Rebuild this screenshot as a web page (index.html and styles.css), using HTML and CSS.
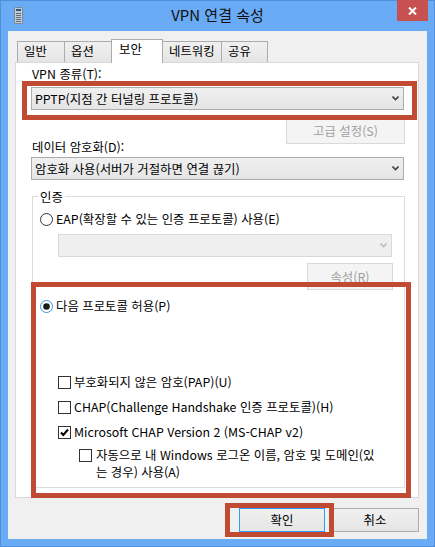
FILE: index.html
```html
<!DOCTYPE html>
<html lang="ko">
<head>
  <meta charset="UTF-8">
  <title>VPN 연결 속성</title>
  <link rel="stylesheet" href="styles.css">
</head>
<body>

  <div class="window">
    <div class="titlebar">
      <div class="app-icon">
        <svg width="9" height="17" viewBox="0 0 9 17">
          <rect x="0.5" y="0.5" width="8" height="16" rx="1" fill="#c3cad2" stroke="#7a8694"/>
          <rect x="2" y="2" width="5" height="2" fill="#34557f"/>
          <path d="M2 6.5h5M2 8.5h5M2 10.5h5M2 12.5h5M2 14.5h5" stroke="#5f6b78" stroke-width="1"/>
        </svg>
      </div>
      <div class="title">VPN 연결 속성</div>
      <div class="close">
        <svg width="9" height="8" viewBox="0 0 9 8">
          <path d="M1 0.5 L8 7.5 M8 0.5 L1 7.5" stroke="#fff" stroke-width="2"/>
        </svg>
      </div>
    </div>

    <div class="client">
      <div class="tabs">
        <div class="tab w1">일반</div>
        <div class="tab w2">옵션</div>
        <div class="tab w3 active">보안</div>
        <div class="tab w4">네트워킹</div>
        <div class="tab w5">공유</div>
      </div>

      <div class="panel">
        <div class="label">VPN 종류(T):</div>
        <div class="combo">
          <span>PPTP(지점 간 터널링 프로토콜)</span>
          <svg class="chev" width="7" height="5" viewBox="0 0 7 5"><path d="M0.5 0.5 L3.5 3.5 L6.5 0.5" fill="none" stroke="#444" stroke-width="1.6"/></svg>
        </div>
        <button class="btn disabled advanced">고급 설정(S)</button>

        <div class="label label-enc">데이터 암호화(D):</div>
        <div class="combo combo-enc">
          <span>암호화 사용(서버가 거절하면 연결 끊기)</span>
          <svg class="chev" width="7" height="5" viewBox="0 0 7 5"><path d="M0.5 0.5 L3.5 3.5 L6.5 0.5" fill="none" stroke="#444" stroke-width="1.6"/></svg>
        </div>

        <div class="group">
          <div class="legend">인증</div>

          <div class="option eap">
            <svg class="radio" width="13" height="13" viewBox="0 0 13 13"><circle cx="6.5" cy="6.5" r="6" fill="#fff" stroke="#333"/></svg>
            EAP(확장할 수 있는 인증 프로토콜) 사용(E)
          </div>
          <div class="combo disabled eap-combo">
            <svg class="chev" width="7" height="5" viewBox="0 0 7 5"><path d="M0.5 0.5 L3.5 3.5 L6.5 0.5" fill="none" stroke="#bdbdbd" stroke-width="1.6"/></svg>
          </div>
          <button class="btn disabled props">속성(R)</button>

          <div class="option allow">
            <svg class="radio" width="13" height="13" viewBox="0 0 13 13"><circle cx="6.5" cy="6.5" r="6" fill="#fff" stroke="#3d8fe0"/><circle cx="6.5" cy="6.5" r="3.3" fill="#1a1a1a"/></svg>
            다음 프로토콜 허용(P)
          </div>

          <div class="option check pap"><span class="box"></span>부호화되지 않은 암호(PAP)(U)</div>
          <div class="option check"><span class="box"></span>CHAP(Challenge Handshake 인증 프로토콜)(H)</div>
          <div class="option check">
            <span class="box">
              <svg width="11" height="11" viewBox="0 0 11 11"><path d="M2 5.5 L4.3 8 L9 2.5" fill="none" stroke="#000" stroke-width="2"/></svg>
            </span>Microsoft CHAP Version 2 (MS-CHAP v2)
          </div>
          <div class="option sub">
            <span class="box"></span>
            <span class="sub-text">자동으로 내 Windows 로그온 이름, 암호 및 도메인(있<br>는 경우) 사용(A)</span>
          </div>
        </div>
      </div>

      <div class="buttons">
        <button class="btn default">확인</button>
        <button class="btn cancel">취소</button>
      </div>
    </div>

    <div class="mark mark-type"></div>
    <div class="mark mark-auth"></div>
    <div class="mark mark-ok"></div>
  </div>

</body>
</html>
```

FILE: styles.css
```css
* {
  box-sizing: border-box;
}

body {
  margin: 0;
  font-family: "Noto Sans CJK KR", sans-serif;
  font-size: 12.4px;
  color: #000;
}

.window {
  position: relative;
  width: 435px;
  height: 547px;
  background-color: #6aabf5;
  box-shadow: inset 0 0 0 1px #4f8fdc;
  padding: 0 8px 8px;
}

/* title bar */

.titlebar {
  display: grid;
  grid-template-columns: 1fr auto 1fr;
  height: 31px;
}

.app-icon {
  margin-left: 6px;
  margin-top: 7px;
  line-height: 0;
}

.title {
  font-size: 15px;
  line-height: 30px;
  color: #111;
}

.close {
  justify-self: end;
  width: 31px;
  height: 21px;
  margin-right: -1px;
  background-color: #c75050;
  display: flex;
  align-items: center;
  justify-content: center;
}

/* client */

.client {
  height: 508px;
  background-color: #f0f0f0;
  padding: 8px 0 0 7px;
}

.tabs {
  display: flex;
  align-items: flex-end;
  height: 23px;
  margin-left: 2px;
}

.tab {
  height: 21px;
  border: 1px solid #acacac;
  border-bottom: none;
  margin-right: -1px;
  padding-left: 6px;
  line-height: 19px;
  background: linear-gradient(#f0f0f0, #e5e5e5);
}

.tab.active {
  position: relative;
  z-index: 1;
  height: 24px;
  margin-bottom: -1px;
  padding-left: 7px;
  line-height: 18px;
  background: #fff;
}

.w1 { width: 48px; }
.w2 { width: 48px; }
.w3 { width: 52px; }
.w4 { width: 60px; }
.w5 { width: 47px; }

.panel {
  width: 404px;
  height: 436px;
  border: 1px solid #d9d9d9;
  background-color: #fff;
  padding: 4px 0 0 15px;
  display: flex;
  flex-direction: column;
  align-items: flex-start;
}

.label {
  line-height: 14px;
  margin-left: 1px;
}

.label-enc {
  margin-top: -4px;
}

.combo {
  width: 373px;
  height: 23px;
  margin-top: 6px;
  border: 1px solid #acacac;
  background: linear-gradient(#f0f0f0, #e5e5e5);
  display: flex;
  align-items: center;
  padding: 0 4px 0 3px;
}

.combo .chev {
  margin-left: auto;
}

.combo-enc {
  margin-top: 3px;
}

.combo.disabled {
  background: #efefef;
  border-color: #d9d9d9;
}

.btn {
  font-family: inherit;
  font-size: 12.4px;
  color: #000;
  height: 24px;
  padding: 0;
  border: 1px solid #acacac;
  background: linear-gradient(#f0f0f0, #e5e5e5);
}

.btn.disabled {
  color: #a0a0a0;
  border-color: #d9d9d9;
  background: #f4f4f4;
}

.advanced {
  width: 119px;
  height: 27px;
  margin-top: 7px;
  margin-left: 255px;
}

/* authentication group */

.group {
  width: 373px;
  margin-top: 16px;
  margin-left: 1px;
  border: 1px solid #dcdcdc;
  padding: 0 0 6px 7px;
  display: flex;
  flex-direction: column;
  align-items: flex-start;
}

.legend {
  margin-top: -7px;
  margin-left: -2px;
  padding: 0 2px;
  line-height: 14px;
  background-color: #fff;
}

.option {
  display: flex;
  align-items: center;
  gap: 3px;
  height: 16px;
  line-height: 16px;
  white-space: nowrap;
}

.eap {
  margin-top: 7px;
}

.eap-combo {
  width: 334px;
  margin-top: 7px;
  margin-left: 18px;
}

.props {
  width: 86px;
  height: 27px;
  margin-top: 6px;
  margin-left: 267px;
}

.allow {
  margin-top: 8px;
}

.check {
  margin-top: 9px;
  margin-left: 18px;
}

.check.pap {
  margin-top: 60px;
}

.box {
  width: 13px;
  height: 13px;
  border: 1px solid #333;
  background-color: #fff;
  display: flex;
  align-items: center;
  justify-content: center;
  flex-shrink: 0;
}

.sub {
  height: auto;
  align-items: flex-start;
  gap: 4px;
  margin-top: 7px;
  margin-left: 39px;
  line-height: 17px;
}

.sub .box {
  margin-top: 2px;
}

/* dialog buttons */

.buttons {
  display: flex;
  justify-content: flex-end;
  gap: 6px;
  margin-top: 10px;
  padding-right: 8px;
}

.btn.default {
  width: 86px;
  border-color: #3399ff;
}

.btn.cancel {
  width: 88px;
}

/* red highlight frames drawn over the dialog */

.mark {
  position: absolute;
  border: 5px solid #c14a32;
}

.mark-type {
  left: 22px;
  top: 81px;
  width: 395px;
  height: 39px;
}

.mark-auth {
  left: 31px;
  top: 282px;
  width: 380px;
  height: 216px;
}

.mark-ok {
  left: 225px;
  top: 503px;
  width: 109px;
  height: 34px;
}
```
